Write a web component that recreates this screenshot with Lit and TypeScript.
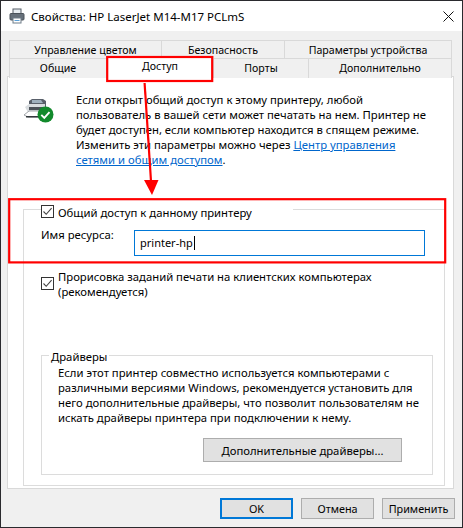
import { LitElement, html, css, svg } from "lit";
import { customElement } from "lit/decorators.js";

const check = html`<span class="cb"><svg viewBox="0 0 11 11" width="11" height="11"><path d="M1.5 5.5 4.2 8.3 9.6 2.2" fill="none" stroke="#444" stroke-width="1.1"/></svg></span>`;

@customElement("app-root")
export class AppRoot extends LitElement {
  static styles = css`
    :host { display: block; font-family: "Noto Sans", sans-serif; font-size: 11.3px; line-height: 15px; color: #000; }
    .win { position: relative; box-sizing: border-box; width: 463px; height: 528px; border: 1px solid #2a2a2e; background: #f0f0f0; overflow: hidden; }
    .title { height: 30px; background: #fff; display: flex; align-items: center; padding-left: 8px; gap: 6px; font-size: 11.5px; }
    .title span { flex: 1; }
    .x { margin-right: 8px; display: block; }
    .tabs { margin: 9px 0 0 8px; width: 442px; }
    .row { display: grid; height: 18px; }
    .r1 { grid-template-columns: 152px 123px 167px; }
    .r2 { grid-template-columns: 97px 107px 95px 143px; }
    .tab { box-sizing: border-box; border: 1px solid #d9d9d9; border-bottom: 0; margin-right: -1px; text-align: center; font-size: 10.6px; line-height: 19px; background: #f0f0f0; }
    .tab.on { background: #fff; height: 21px; margin-top: -2px; position: relative; z-index: 1; line-height: 18px; }
    .panel { box-sizing: border-box; margin-left: 6px; width: 447px; height: 413px; background: #fff; border: 1px solid #d9d9d9; padding: 15px 8px 0 15px; }
    .intro { display: flex; align-items: flex-start; margin-bottom: 42px; }
    .intro svg { flex: none; margin: 6px 21px 0 0; display: block; }
    .intro p { margin: 0; width: 360px; }
    a { color: #0066cc; text-decoration: underline; }
    .group { box-sizing: border-box; border: 1px solid #dcdcdc; }
    .share { height: 277px; width: 422px; padding-left: 17px; }
    .legend { display: flex; width: 252px; margin-top: -5px; background: #fff; gap: 4px; height: 15px; }
    .cb { box-sizing: border-box; flex: none; width: 13px; height: 13px; border: 1px solid #333; background: #fff; display: flex; align-items: center; justify-content: center; }
    .cb svg { display: block; }
    .name { display: flex; margin-top: 10px; height: 26px; }
    .name label { width: 93px; line-height: 15px; margin-top: -3px; }
    .input { box-sizing: border-box; width: 291px; height: 26px; border: 1px solid #0078d7; padding-left: 5px; font-size: 11px; line-height: 24px; display: flex; align-items: center; }
    .caret { display: inline-block; width: 1px; height: 14px; background: #000; margin-left: 1px; }
    .spool { display: flex; gap: 4px; margin-top: 13px; }
    .spool .cb { margin-top: 8px; }
    .drivers { width: 392px; height: 120px; margin-top: 56px; padding: 0 0 0 16px; }
    .drivers .dl { width: fit-content; margin: -7px 0 0 6px; padding: 0 2px; background: #fff; height: 16px; position: relative; left: -15px; }
    .drivers p { margin: 0; width: 370px; }
    .drow { display: flex; justify-content: flex-end; padding-right: 30px; margin-top: 13px; }
    button { box-sizing: border-box; font: inherit; color: #000; background: #e1e1e1; border: 1px solid #adadad; padding: 0; margin: 0; }
    .more { width: 199px; height: 24px; }
    .foot { display: flex; justify-content: flex-end; gap: 8px; margin: 9px 7px 0 0; }
    .foot button { width: 73px; height: 21px; font-size: 10.8px; }
    .foot .def { border: 2px solid #0078d7; }
    .anno { position: absolute; left: -1px; top: -1px; pointer-events: none; z-index: 2; }
  `;
  render() {
    return html`<div class="win">
      <div class="title">
        <svg width="16" height="16" viewBox="0 0 16 16">
          <rect x="4" y="1" width="8" height="5" fill="#e8eef2" stroke="#555d66"/>
          <rect x="1" y="5.5" width="14" height="6.5" rx="1" fill="#66707a" stroke="#4a525a"/>
          <rect x="4" y="10" width="8" height="5" fill="#fff" stroke="#6f7d88"/>
          <path d="M5.5 12.5h5" stroke="#5aa0d8"/>
        </svg>
        <span>Свойства: HP LaserJet M14-M17 PCLmS</span>
        <svg class="x" width="11" height="11" viewBox="0 0 11 11"><path d="M.5.5l10 10M10.5.5l-10 10" stroke="#111" stroke-width="1"/></svg>
      </div>
      <div class="tabs">
        <div class="row r1"><div class="tab">Управление цветом</div><div class="tab">Безопасность</div><div class="tab">Параметры устройства</div></div>
        <div class="row r2"><div class="tab">Общие</div><div class="tab on">Доступ</div><div class="tab">Порты</div><div class="tab">Дополнительно</div></div>
      </div>
      <div class="panel">
        <div class="intro">
          <svg width="32" height="26" viewBox="0 0 32 26">
            <path d="M6 3 9 1h11l3 2v6H6z" fill="#59606a"/>
            <path d="M9 2h9l2 3H9z" fill="#9fb0bd"/>
            <path d="M2 9 6 6h16v10H6z" fill="#d9dde0"/>
            <path d="M6 9h16v3H6z" fill="#4b5158"/>
            <path d="M1 17l5-4h14v6H5z" fill="#fff" stroke="#8a8f94" stroke-width=".8"/>
            <path d="M3 18h15v1.5H3z" fill="#33383d"/>
            <circle cx="22.5" cy="16.5" r="8" fill="#128a2c"/>
            <path d="M18.3 16.8l3 3 5.2-5.6" fill="none" stroke="#fff" stroke-width="1.9"/>
          </svg>
          <p>Если открыт общий доступ к этому принтеру, любой пользователь в вашей сети может печатать на нем. Принтер не будет доступен, если компьютер находится в спящем режиме. Изменить эти параметры можно через <a>Центр управления</a><br><a>сетями и общим доступом</a>.</p>
        </div>
        <div class="group share">
          <div class="legend">${check}<span>Общий доступ к данному принтеру</span></div>
          <div class="name"><label>Имя ресурса:</label><div class="input">printer-hp<i class="caret"></i></div></div>
          <div class="spool">${check}<span>Прорисовка заданий печати на клиентских компьютерах<br>(рекомендуется)</span></div>
          <div class="group drivers">
            <div class="dl">Драйверы</div>
            <p>Если этот принтер совместно используется компьютерами с различными версиями Windows, рекомендуется установить для него дополнительные драйверы, что позволит пользователям не искать драйверы принтера при подключении к нему.</p>
            <div class="drow"><button class="more">Дополнительные драйверы...</button></div>
          </div>
        </div>
      </div>
      <div class="foot"><button class="def">OK</button><button>Отмена</button><button>Применить</button></div>
      <svg class="anno" width="463" height="528" viewBox="0 0 463 528">
        ${svg`<g fill="none" stroke="#f00" stroke-width="2.2">
          <rect x="107.2" y="57" width="105" height="24"/>
          <rect x="9.2" y="199.2" width="436" height="63.2"/>
          <path d="M144.6 83 151 181"/>
        </g>
        <path d="M144 180h14.5L152 195z" fill="#f00"/>`}
      </svg>
    </div>`;
  }
}
